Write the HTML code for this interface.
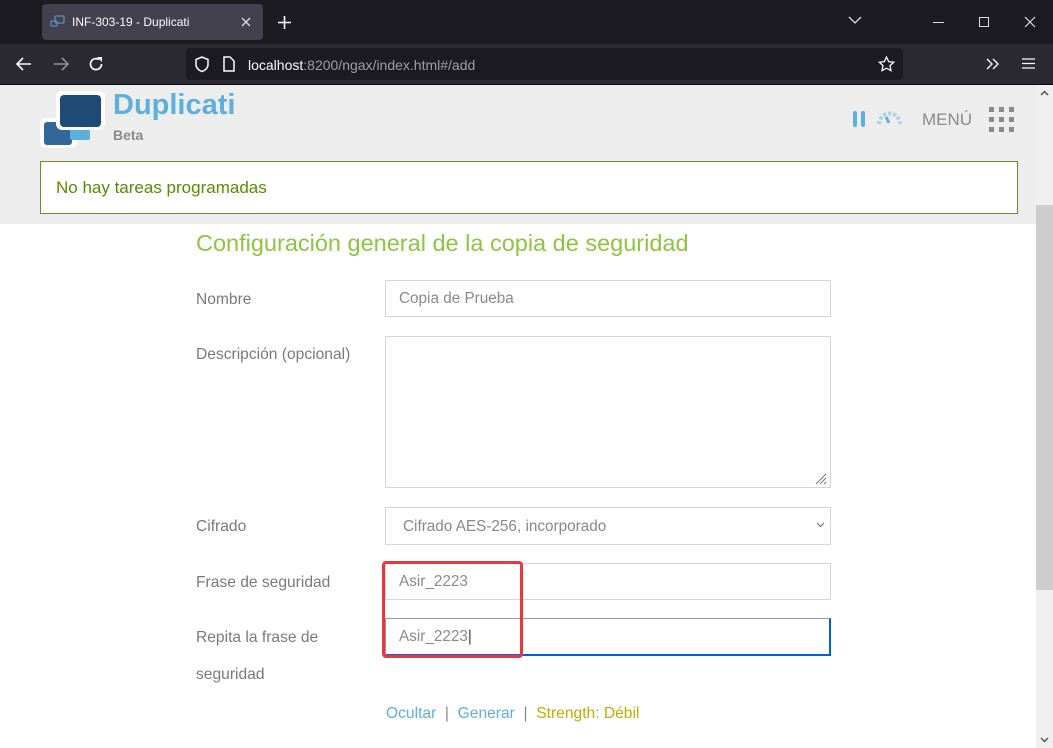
<!DOCTYPE html>
<html><head><meta charset="utf-8"><style>
*{box-sizing:border-box;margin:0;padding:0}
body{width:1053px;height:748px;overflow:hidden;font-family:"Liberation Sans","DejaVu Sans",sans-serif;background:#fff;position:relative}
.abs{position:absolute}
.lbl{position:absolute;left:196px;font-size:15.6px;color:#7a7a7a}
.inp{position:absolute;left:385px;width:446px;border:1px solid #d6d6d6;background:#fff;font-size:15.3px;color:#8a8a8a;padding-left:13px}
</style></head><body>
<div class="abs" style="left:0;top:0;width:1053px;height:44px;background:#1c1b22"></div>
<div class="abs" style="left:42px;top:4px;width:221px;height:36px;background:#42414d;border-radius:4px"></div>
<svg class="abs" style="left:50px;top:15px" width="16" height="14" viewBox="0 0 16 14"><rect x="5" y="1" width="9" height="7" rx="1" fill="none" stroke="#5b8fb9" stroke-width="1.3"/><rect x="1" y="6" width="6" height="5" rx="1" fill="none" stroke="#5b8fb9" stroke-width="1.3"/></svg>
<div class="abs" style="left:72px;top:15px;font-size:12px;color:#fbfbfe">INF-303-19 - Duplicati</div>
<svg class="abs" style="left:241px;top:17px" width="10" height="10"><path d="M1 1l8 8M9 1L1 9" stroke="#ddd" stroke-width="1.3"/></svg>
<svg class="abs" style="left:278px;top:16px" width="13" height="13"><path d="M6.5 0v13M0 6.5h13" stroke="#fff" stroke-width="1.6"/></svg>
<svg class="abs" style="left:848px;top:16px" width="14" height="9"><path d="M1 1l6 6 6-6" stroke="#ddd" fill="none" stroke-width="1.3"/></svg>
<div class="abs" style="left:933px;top:22px;width:11px;height:1px;background:#ddd"></div>
<div class="abs" style="left:979px;top:17px;width:10px;height:10px;border:1px solid #ddd"></div>
<svg class="abs" style="left:1024px;top:16px" width="12" height="12"><path d="M1 1l10 10M11 1L1 11" stroke="#ddd" stroke-width="1.2"/></svg>
<div class="abs" style="left:0;top:44px;width:1053px;height:40px;background:#2b2a33"></div>
<div class="abs" style="left:0;top:84px;width:1053px;height:1px;background:#0c0c0d"></div>
<svg class="abs" style="left:16px;top:57px" width="16" height="14"><path d="M15 7H2M7 1L1 7l6 6" stroke="#fbfbfe" stroke-width="1.6" fill="none"/></svg>
<svg class="abs" style="left:53px;top:57px" width="16" height="14"><path d="M1 7h13M9 1l6 6-6 6" stroke="#8f8f9d" stroke-width="1.6" fill="none"/></svg>
<svg class="abs" style="left:88px;top:56px" width="16" height="16"><path d="M13.5 8A5.5 5.5 0 1 1 11 3.5" stroke="#fbfbfe" stroke-width="1.7" fill="none"/><path d="M9 1h5v5z" fill="#fbfbfe"/></svg>
<div class="abs" style="left:186px;top:48px;width:717px;height:32px;background:#1c1b22;border-radius:4px"></div>
<svg class="abs" style="left:194px;top:56px" width="16" height="17"><path d="M8 1L2 3.5v5c0 3.5 3 6 6 7 3-1 6-3.5 6-7v-5z" fill="none" stroke="#fbfbfe" stroke-width="1.5"/></svg>
<svg class="abs" style="left:223px;top:56px" width="12" height="16"><path d="M1 1h6l4 4v10H1z" fill="none" stroke="#fbfbfe" stroke-width="1.5"/></svg>
<div class="abs" style="left:248px;top:57px;font-size:14px;color:#fbfbfe">localhost<span style="color:#9e9ea6">:8200/ngax/index.html#/add</span></div>
<svg class="abs" style="left:878px;top:56px" width="17" height="16"><path d="M8.5 1l2.2 4.6 5 .6-3.7 3.4 1 5L8.5 12.2 4 14.6l1-5L1.3 6.2l5-.6z" fill="none" stroke="#fbfbfe" stroke-width="1.3"/></svg>
<svg class="abs" style="left:986px;top:58px" width="14" height="12"><path d="M1 1l5 5-5 5M7 1l5 5-5 5" stroke="#fbfbfe" stroke-width="1.4" fill="none"/></svg>
<svg class="abs" style="left:1022px;top:58px" width="13" height="11"><path d="M0 1h13M0 5.5h13M0 10h13" stroke="#fbfbfe" stroke-width="1.3"/></svg>
<div class="abs" style="left:0;top:85px;width:1036px;height:139px;background:#ededed"></div>
<div class="abs" style="left:40px;top:118px;width:37px;height:30px;background:#fff;border-radius:6px"></div>
<div class="abs" style="left:44px;top:122px;width:28px;height:23px;background:#336699;border-radius:3px"></div>
<div class="abs" style="left:70px;top:128px;width:20px;height:12px;background:#5eb0dc;border-radius:2px"></div>
<div class="abs" style="left:56px;top:91px;width:49px;height:39px;background:#fff;border-radius:6px"></div>
<div class="abs" style="left:60px;top:95px;width:41px;height:32px;background:#1f4a75;border-radius:4px"></div>
<div class="abs" style="left:113px;top:89px;font-size:29px;font-weight:bold;color:#5eb0dc">Duplicati</div>
<div class="abs" style="left:113px;top:127px;font-size:14px;font-weight:bold;color:#8a8a8a">Beta</div>
<div class="abs" style="left:853px;top:111px;width:4px;height:16px;background:#5eb0dc;border-radius:2px"></div>
<div class="abs" style="left:861px;top:111px;width:4px;height:16px;background:#5eb0dc;border-radius:2px"></div>
<svg class="abs" style="left:876px;top:111px" width="27" height="14"><path d="M3 13A10 10 0 0 1 24 13" stroke="#a8d2ec" stroke-width="4" fill="none" stroke-dasharray="3 2"/><path d="M13 12l-3-6" stroke="#5eb0dc" stroke-width="3"/></svg>
<div class="abs" style="left:922px;top:110px;font-size:17px;color:#8a8a8a">MENÚ</div>
<svg class="abs" style="left:989px;top:107px" width="26" height="25" fill="#8a8a8a"><rect x="0" y="0" width="5" height="5"/><rect x="10" y="0" width="5" height="5"/><rect x="20" y="0" width="5" height="5"/><rect x="0" y="10" width="5" height="5"/><rect x="10" y="10" width="5" height="5"/><rect x="20" y="10" width="5" height="5"/><rect x="0" y="20" width="5" height="5"/><rect x="10" y="20" width="5" height="5"/><rect x="20" y="20" width="5" height="5"/></svg>
<div class="abs" style="left:40px;top:161px;width:978px;height:53px;background:#fff;border:1px solid #6b8e23"></div>
<div class="abs" style="left:56px;top:178px;font-size:17px;color:#5a8a00">No hay tareas programadas</div>
<div class="abs" style="left:1036px;top:85px;width:17px;height:663px;background:#f0f0f0"></div>
<div class="abs" style="left:1036px;top:205px;width:17px;height:385px;background:#cdcdcd"></div>
<svg class="abs" style="left:1040px;top:90px" width="9" height="6"><path d="M1 5l3.5-3.5L8 5" stroke="#555" stroke-width="1.5" fill="none"/></svg>
<svg class="abs" style="left:1040px;top:737px" width="9" height="6"><path d="M1 1l3.5 3.5L8 1" stroke="#555" stroke-width="1.5" fill="none"/></svg>
<div class="abs" style="left:196px;top:230px;font-size:23.5px;color:#8cc63f">Configuración general de la copia de seguridad</div>
<div class="lbl" style="top:291px">Nombre</div>
<div class="inp" style="top:280px;height:37px;line-height:36px">Copia de Prueba</div>
<div class="lbl" style="top:346px">Descripción (opcional)</div>
<div class="inp" style="top:336px;height:152px"></div>
<svg class="abs" style="left:815px;top:473px" width="12" height="12"><path d="M11 1L1 11M11 5L5 11M11 9L9 11" stroke="#777" stroke-width="1"/></svg>
<div class="lbl" style="top:518px">Cifrado</div>
<div class="inp" style="top:507px;height:38px;line-height:37px;padding-left:17px;color:#888">Cifrado AES-256, incorporado</div>
<svg class="abs" style="left:816px;top:522px" width="9" height="6"><path d="M1 1l3.5 3.5L8 1" stroke="#777" stroke-width="1.2" fill="none"/></svg>
<div class="lbl" style="top:574px">Frase de seguridad</div>
<div class="inp" style="top:563px;height:37px;line-height:36px">Asir_2223</div>
<div class="lbl" style="top:629px">Repita la frase de</div>
<div class="lbl" style="top:666px">seguridad</div>
<div class="inp" style="top:618px;height:38px;line-height:35px;border-color:#999;border-right:2px solid #0060df;border-bottom:2px solid #0060df">Asir_2223<span style="color:#444">|</span></div>
<div class="abs" style="left:382px;top:561px;width:141px;height:97px;border:3px solid #e8383d;border-radius:4px"></div>
<div class="abs" style="left:386px;top:705px;font-size:15.6px;color:#5eb0dc">Ocultar <span style="color:#888">&nbsp;|&nbsp;</span> Generar <span style="color:#888">&nbsp;|&nbsp;</span> <span style="color:#b8b000">Strength: Débil</span></div>
</body></html>
